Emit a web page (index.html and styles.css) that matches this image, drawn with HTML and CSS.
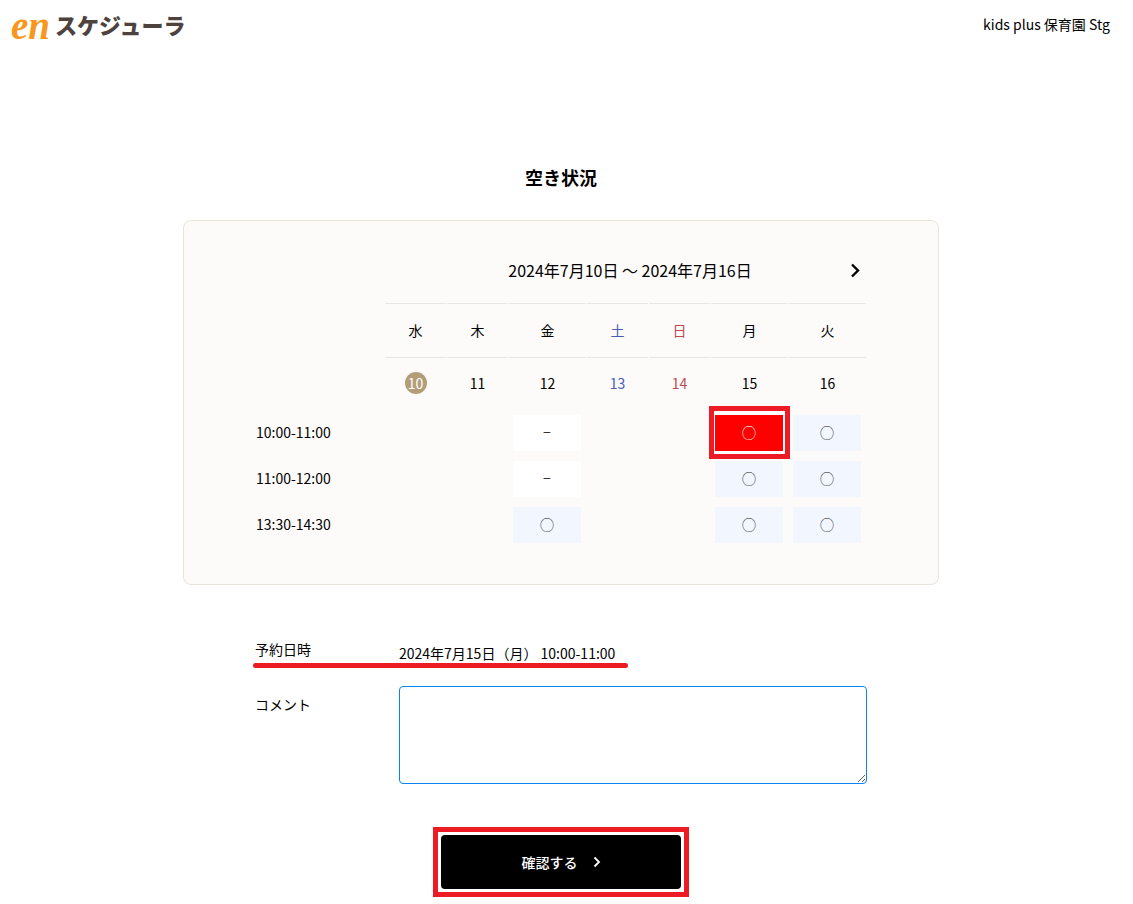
FILE: index.html
```html
<!DOCTYPE html>
<html lang="ja">
<head>
<meta charset="utf-8">
<meta name="viewport" content="width=device-width, initial-scale=1">
<title>空き状況</title>
<link rel="stylesheet" href="styles.css">
</head>
<body>
<header class="header">
  <a class="logo" href="#"><span class="logo-en">en</span><span class="logo-name">スケジューラ</span></a>
  <span class="facility">kids plus 保育園 Stg</span>
</header>
<main class="main">
  <h1 class="title">空き状況</h1>
  <section class="card">
    <div class="week-nav">
      <span class="week-range">2024年7月10日 ～ 2024年7月16日</span>
      <button class="week-next" type="button" aria-label="次の週"><svg width="12" height="16" viewBox="0 0 12 16"><path d="M3 2.500l6 6-6 6" fill="none" stroke="#000" stroke-width="2.4"/></svg></button>
    </div>
    <table class="calendar">
      <colgroup><col><col class="narrow"><col class="narrow"><col class="wide"><col class="narrow"><col class="narrow"><col class="wide"><col class="wide"></colgroup>
      <thead>
        <tr class="weekdays"><td></td><th>水</th><th>木</th><th>金</th><th class="sat">土</th><th class="sun">日</th><th>月</th><th>火</th></tr>
        <tr class="dates"><td></td><th><span class="today">10</span></th><th>11</th><th>12</th><th class="sat">13</th><th class="sun">14</th><th>15</th><th>16</th></tr>
      </thead>
      <tbody>
        <tr><th class="time">10:00-11:00</th><td></td><td></td><td><span class="slot full">−</span></td><td></td><td></td><td class="picked"><span class="mark"></span><button class="slot selected" type="button">◯</button></td><td><button class="slot" type="button">◯</button></td></tr>
        <tr><th class="time">11:00-12:00</th><td></td><td></td><td><span class="slot full">−</span></td><td></td><td></td><td><button class="slot" type="button">◯</button></td><td><button class="slot" type="button">◯</button></td></tr>
        <tr><th class="time">13:30-14:30</th><td></td><td></td><td><button class="slot" type="button">◯</button></td><td></td><td></td><td><button class="slot" type="button">◯</button></td><td><button class="slot" type="button">◯</button></td></tr>
      </tbody>
    </table>
  </section>
  <form class="form">
    <div class="row underlined">
      <span class="label">予約日時</span>
      <span class="value">2024年7月15日（月） 10:00-11:00</span>
    </div>
    <div class="row">
      <label class="label comment-label" for="comment">コメント</label>
      <textarea class="comment" id="comment"></textarea>
    </div>
    <div class="submit-frame">
      <button class="submit" type="button">確認する<svg width="8" height="12" viewBox="0 0 8 12"><path d="M1.500 1.500L6 6l-4.500 4.500" fill="none" stroke="#fff" stroke-width="1.800"/></svg></button>
    </div>
  </form>
</main>
</body>
</html>
```
FILE: styles.css
```css
* { box-sizing: border-box; }
body {
  margin: 0;
  padding-right: 11px;
  background: #fff;
  color: #000;
  font: 14px/22px "Noto Sans CJK JP", sans-serif;
}
button, textarea { font: inherit; color: inherit; }
button { padding: 0; border: 0; cursor: pointer; }
svg { display: block; }

.header {
  display: flex;
  justify-content: space-between;
  align-items: center;
  height: 48px;
  padding: 0 12px 0 11px;
}
.logo { display: flex; align-items: center; gap: 5px; text-decoration: none; }
.logo-en { padding-top: 4px; color: #f7981d; font: italic bold 39px/44px "Liberation Serif", serif; }
.logo-name { color: #4d423e; font-size: 22px; line-height: 48px; font-weight: 900; }

.main { max-width: 756px; margin: 0 auto; padding-top: 116px; }
.title { margin: 0 0 30px; font-size: 18px; line-height: 26px; font-weight: bold; text-align: center; }

.card {
  padding: 36px 71px;
  border: 1px solid #e8e4da;
  border-radius: 8px;
  background: #fdfbfa;
}
.week-nav { display: flex; align-items: center; margin: 0 0 19px 162px; }
.week-range { flex: 1; font-size: 16px; line-height: 26px; text-align: center; }
.week-next { display: flex; align-items: center; justify-content: center; width: 24px; height: 26px; background: none; }

.calendar { width: 100%; table-layout: fixed; border-spacing: 1px; }
.narrow { width: 61px; }
.wide { width: 77px; }
.calendar th { padding: 0 0 2px; font-weight: normal; text-align: center; }
.calendar td { padding: 0; }
.weekdays th { height: 55px; border-top: 1px solid #e6e6e6; border-bottom: 1px solid #e6e6e6; }
.dates th { height: 50px; }
.calendar .sat { color: #4b5bb5; }
.calendar .sun { color: #b84c50; }
.calendar .time { text-align: left; }
.today {
  display: block;
  width: 22px;
  margin: 0 auto;
  border-radius: 50%;
  background: #b39d78;
  color: #fff;
}
.calendar tbody td { height: 45px; padding: 5px 5px 4px 4px; }
.slot { display: block; width: 100%; height: 36px; padding-bottom: 2px; background: #f1f6ff; color: #333; line-height: 34px; text-align: center; }
.full { background: #fff; }
.picked { position: relative; }
.selected { position: relative; background: #f00; color: #fff; }
.mark { position: absolute; inset: -4px -2px; border: 5px solid #ed1c24; background: #fff; }

.form { padding: 53px 72px 0; }
.row { position: relative; display: grid; grid-template-columns: 144px 1fr; margin-bottom: 18px; }
.underlined::after {
  content: "";
  position: absolute;
  top: 25px;
  left: -2px;
  width: 375px;
  height: 5px;
  border-radius: 3px;
  background: #ed1c24;
}
.value { line-height: 30px; }
.comment-label { padding-top: 7px; }
.comment { display: block; width: 100%; height: 98px; border: 1px solid #0a84f0; border-radius: 4px; background: #fff; resize: vertical; }
.submit-frame { width: 256px; margin: 43px auto 0; padding: 3px; border: 5px solid #ed1c24; }
.submit {
  display: flex;
  align-items: center;
  justify-content: center;
  gap: 15px;
  width: 100%;
  height: 54px;
  border-radius: 4px;
  background: #000;
  color: #fff;
  font-weight: 500;
}
```
